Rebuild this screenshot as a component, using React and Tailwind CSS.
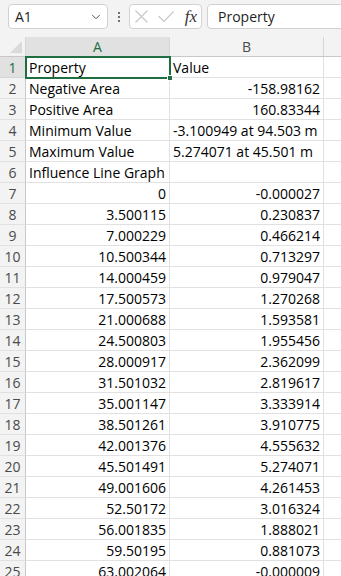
import { ChevronDown } from "lucide-react"

const head = [
  ["Property", "Value"],
  ["Negative Area", "-158.98162", "r"],
  ["Positive Area", "160.83344", "r"],
  ["Minimum Value", "-3.100949 at 94.503 m"],
  ["Maximum Value", "5.274071 at 45.501 m"],
  ["Influence Line Graph", ""],
]

const nums = [
  ["0", "-0.000027"],
  ["3.500115", "0.230837"],
  ["7.000229", "0.466214"],
  ["10.500344", "0.713297"],
  ["14.000459", "0.979047"],
  ["17.500573", "1.270268"],
  ["21.000688", "1.593581"],
  ["24.500803", "1.955456"],
  ["28.000917", "2.362099"],
  ["31.501032", "2.819617"],
  ["35.001147", "3.333914"],
  ["38.501261", "3.910775"],
  ["42.001376", "4.555632"],
  ["45.501491", "5.274071"],
  ["49.001606", "4.261453"],
  ["52.50172", "3.016324"],
  ["56.001835", "1.888021"],
  ["59.50195", "0.881073"],
  ["63.002064", "-0.000009"],
]

const rows = [
  ...head.map(([a, b, r]) => ({ a, b, alignA: "left", alignB: r ? "right" : "left" })),
  ...nums.map(([a, b]) => ({ a, b, alignA: "right", alignB: "right" })),
]

function Row({ n, row }) {
  const sel = n === 1
  return (
    <div className="flex h-[21px] shrink-0">
      <div
        className={
          "w-[26px] shrink-0 flex items-center justify-center border-r border-b text-[14px] " +
          (sel
            ? "bg-[#e1e1e1] text-[#1e6e42] border-r-[#c8c8c8] border-b-[#d6d6d6]"
            : "bg-[#f3f3f3] text-[#4a4a4a] border-r-[#c8c8c8] border-b-[#e1e1e1]")
        }
      >
        {n}
      </div>
      <div
        className={
          "relative w-[144px] shrink-0 flex items-center border-r border-b border-[#e1e1e1] px-[3px] whitespace-nowrap " +
          (row.alignA === "right" ? "justify-end" : "justify-start")
        }
      >
        <span className="relative z-10">{row.a}</span>
        {sel && (
          <div className="absolute left-[-1px] top-[-1px] w-[146px] h-[23px] border-2 border-[#1e6e42] z-20">
            <div className="absolute right-[-4px] bottom-[-4px] w-[6px] h-[6px] bg-[#1e6e42] border border-white"></div>
          </div>
        )}
      </div>
      <div
        className={
          "w-[154px] shrink-0 flex items-center border-r border-b border-[#e1e1e1] px-[3px] whitespace-nowrap " +
          (row.alignB === "right" ? "justify-end" : "justify-start")
        }
      >
        {row.b}
      </div>
      <div className="flex-1 border-b border-[#e1e1e1]"></div>
    </div>
  )
}

export default function App() {
  return (
    <div className="w-[341px] h-[576px] overflow-hidden bg-white flex flex-col font-['Open_Sans',_'Noto_Sans',_sans-serif] text-[14px] text-black">
      {/* formula bar */}
      <div className="h-[37px] shrink-0 bg-[#f3f3f3] flex items-start pt-[4px] pl-[8px]">
        <div className="w-[100px] h-[25px] shrink-0 bg-white border border-[#d1d1d1] rounded-[4px] flex items-center justify-between pl-[6px] pr-[4px]">
          <span className="text-[14px] text-[#1f1f1f]">A1</span>
          <ChevronDown size={14} strokeWidth={1.5} className="text-[#444]" />
        </div>
        <div className="w-[21px] h-[25px] shrink-0 flex flex-col items-center justify-center gap-[2px]">
          <span className="w-[2px] h-[2px] bg-[#444] rounded-full"></span>
          <span className="w-[2px] h-[2px] bg-[#444] rounded-full"></span>
          <span className="w-[2px] h-[2px] bg-[#444] rounded-full"></span>
        </div>
        <div className="w-[73px] h-[25px] shrink-0 bg-white border border-[#d1d1d1] rounded-[4px] flex items-center pl-[5px] pr-[4px]">
          <svg width="13" height="13" viewBox="0 0 13 13" fill="none" stroke="#c6c6c6" strokeWidth="1.1">
            <path d="M0.5 0.5 12.5 12.5M12.5 0.5 0.5 12.5" />
          </svg>
          <svg className="ml-[10px]" width="16" height="11" viewBox="0 0 16 11" fill="none" stroke="#c6c6c6" strokeWidth="1.1">
            <path d="M0.5 5 6 10.5 15.5 0.5" />
          </svg>
          <span className="ml-auto font-['Liberation_Serif',_serif] italic text-[17px] text-[#333] leading-none">fx</span>
        </div>
        <div className="ml-[5px] w-[140px] h-[25px] shrink-0 bg-white border border-[#d1d1d1] rounded-[4px] flex items-center pl-[10px]">
          <span className="text-[14px] text-[#1f1f1f]">Property</span>
        </div>
      </div>

      {/* column headers */}
      <div className="flex h-[20px] shrink-0 bg-[#f3f3f3] border-b border-[#c8c8c8]">
        <div className="w-[26px] shrink-0 relative border-r border-[#d6d6d6]">
          <div className="absolute right-[3px] bottom-[3px] w-0 h-0 border-l-[12px] border-l-transparent border-b-[12px] border-b-[#dadada]"></div>
        </div>
        <div className="w-[144px] shrink-0 bg-[#e1e1e1] border-r border-[#d6d6d6] flex items-center justify-center text-[#1e6e42]">
          A
        </div>
        <div className="w-[154px] shrink-0 border-r border-[#d6d6d6] flex items-center justify-center text-[#4a4a4a]">
          B
        </div>
        <div className="flex-1"></div>
      </div>

      {rows.map((row, i) => (
        <Row key={i} n={i + 1} row={row} />
      ))}
    </div>
  )
}
